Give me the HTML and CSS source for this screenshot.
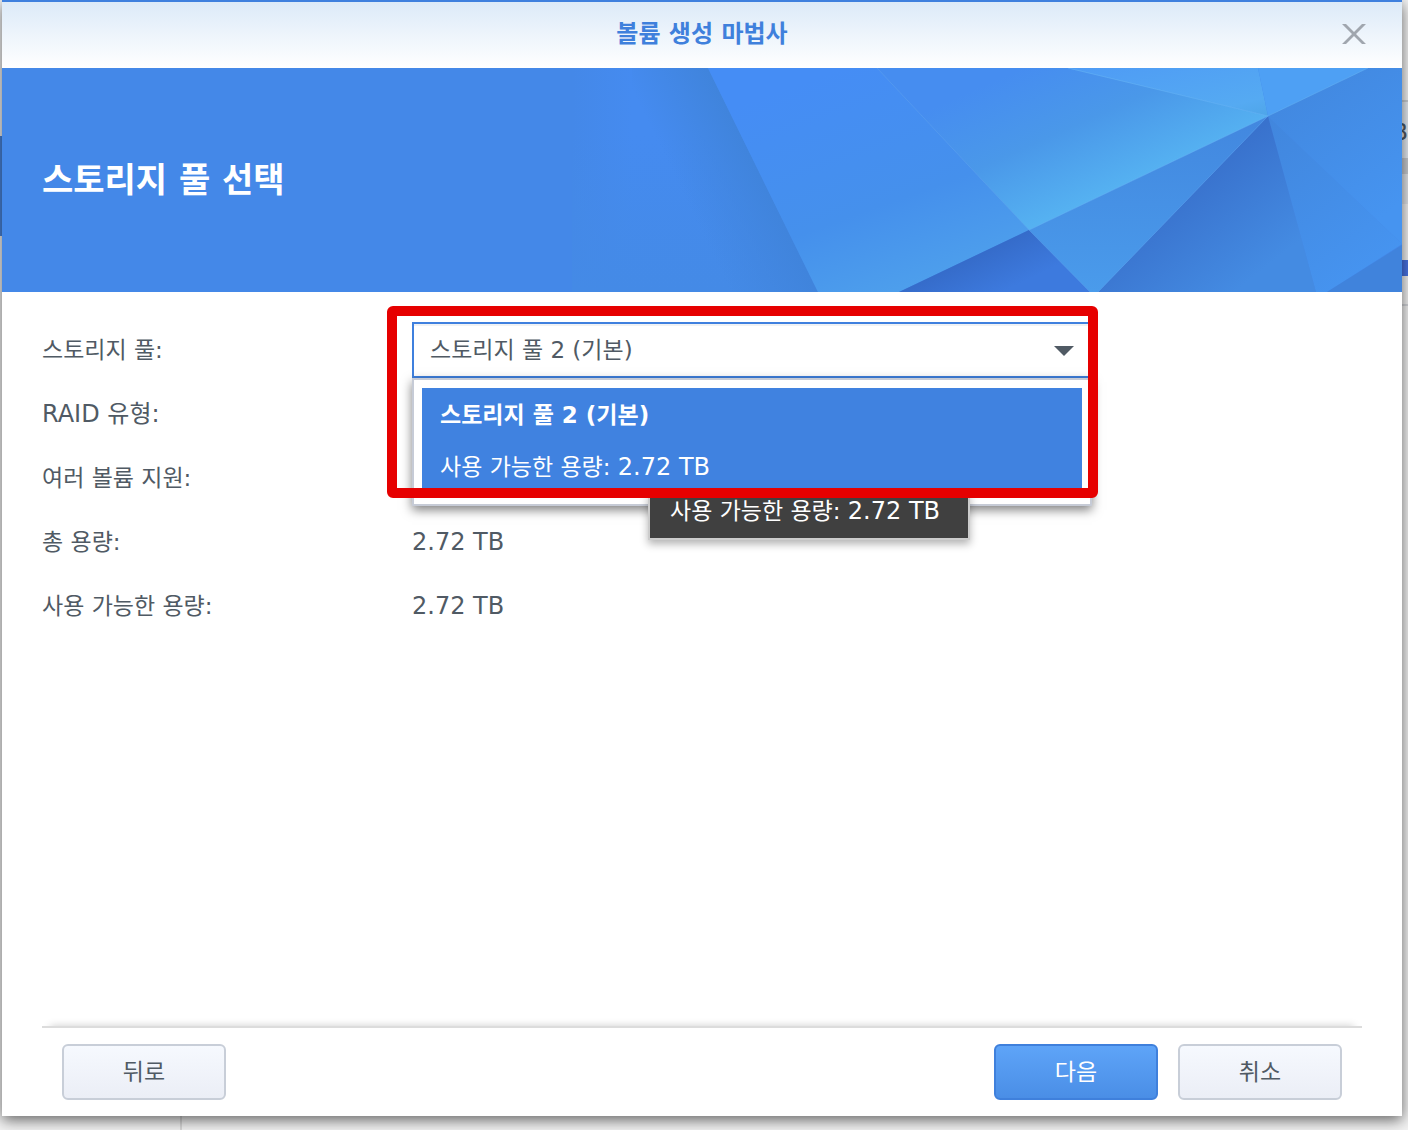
FILE: index.html
```html
<!DOCTYPE html>
<html lang="ko">
<head>
    <meta charset="UTF-8">
    <meta name="viewport" content="width=device-width, initial-scale=1.0">
    <title>볼륨 생성 마법사</title>
    <link rel="stylesheet" href="styles.css">
</head>
<body>

<div class="desktop">
    <!-- Storage manager window behind the wizard -->
    <div class="backdrop" aria-hidden="true">
        <div class="side-nav"><div class="nav-active"></div></div>
        <div class="pool-list">
            <div class="pool-head">TB</div>
            <div class="pool-bar"></div>
            <div class="pool-sub"></div>
            <div class="pool-usage"></div>
            <div class="pool-end"></div>
        </div>
    </div>

    <main class="dialog">
        <header class="title-bar">
            <h1>볼륨 생성 마법사</h1>
            <button class="close" type="button" aria-label="닫기">
                <svg width="24" height="20" viewBox="0 0 24 20">
                    <path d="M0 0h4l8 8 8-8h4L14 10l10 10h-4l-8-8-8 8H0l10-10z" fill="#a0a6ae"/>
                </svg>
            </button>
        </header>

        <section class="banner">
            <svg class="facets" width="830" height="224" viewBox="0 0 830 224" aria-hidden="true">
                <defs>
                    <linearGradient id="g1" gradientUnits="userSpaceOnUse" x1="0" y1="0" x2="200" y2="0">
                        <stop offset="0" stop-color="#4488e8"/>
                        <stop offset=".3" stop-color="#458bf0"/>
                        <stop offset="1" stop-color="#458bf0"/>
                    </linearGradient>
                    <linearGradient id="g1b" x1="0" y1="0" x2="0" y2="1">
                        <stop offset=".3" stop-color="#448ae6" stop-opacity="0"/>
                        <stop offset="1" stop-color="#448ae6"/>
                    </linearGradient>
                    <linearGradient id="g1s" gradientUnits="userSpaceOnUse" x1="120" y1="145" x2="190" y2="111">
                        <stop offset="0" stop-color="#4084dc" stop-opacity="0"/>
                        <stop offset="1" stop-color="#4084dc"/>
                    </linearGradient>
                    <linearGradient id="g2" gradientUnits="userSpaceOnUse" x1="270" y1="0" x2="350" y2="224">
                        <stop offset="0" stop-color="#458df5"/>
                        <stop offset=".6" stop-color="#4590ec"/>
                        <stop offset="1" stop-color="#4ea0ec"/>
                    </linearGradient>
                    <linearGradient id="g3" gradientUnits="userSpaceOnUse" x1="450" y1="0" x2="510" y2="135">
                        <stop offset="0" stop-color="#468df0"/>
                        <stop offset=".5" stop-color="#4a98e9"/>
                        <stop offset="1" stop-color="#55b1f1"/>
                    </linearGradient>
                    <linearGradient id="g4" x1="0" y1="0" x2="1" y2="1">
                        <stop offset="0" stop-color="#4e9bf5"/>
                        <stop offset=".8" stop-color="#55aaf2"/>
                        <stop offset="1" stop-color="#4ea5e8"/>
                    </linearGradient>
                    <linearGradient id="g5" x1="0" y1="0" x2="0" y2="1">
                        <stop offset="0" stop-color="#4287df"/>
                        <stop offset="1" stop-color="#4a9beb"/>
                    </linearGradient>
                    <linearGradient id="g6" gradientUnits="userSpaceOnUse" x1="410" y1="182" x2="430" y2="224">
                        <stop offset="0" stop-color="#356bc9"/>
                        <stop offset="1" stop-color="#3d7ade"/>
                    </linearGradient>
                    <linearGradient id="g7" gradientUnits="userSpaceOnUse" x1="610" y1="120" x2="680" y2="210">
                        <stop offset="0" stop-color="#3972cd"/>
                        <stop offset="1" stop-color="#448be2"/>
                    </linearGradient>
                    <linearGradient id="g8" x1="0" y1="0" x2=".6" y2="1">
                        <stop offset="0" stop-color="#4186dd"/>
                        <stop offset="1" stop-color="#4694f0"/>
                    </linearGradient>
                </defs>
                <rect width="260" height="224" fill="url(#g1)"/>
                <rect width="260" height="224" fill="url(#g1b)"/>
                <path d="M60 0h76l110 224H60z" fill="url(#g1s)"/>
                <path d="M136 0H305L457 162 327 224H246z" fill="url(#g2)"/>
                <path d="M305 0H496L696 48 457 162z" fill="url(#g3)"/>
                <path d="M496 0H686L696 48z" fill="url(#g4)"/>
                <path d="M686 0H796L696 48z" fill="#4ea0f4"/>
                <path d="M696 48L796 0h34v176z" fill="url(#g8)"/>
                <path d="M696 48L830 176 755 224H744z" fill="url(#g8)"/>
                <path d="M696 48L744 224H526z" fill="url(#g7)"/>
                <path d="M696 48L526 224H518L457 162z" fill="url(#g5)"/>
                <path d="M327 224L457 162 518 224z" fill="url(#g6)"/>
                <path d="M755 224L830 177v47z" fill="#4083dc"/>
                <path d="M457 162L696 48 796 0M496 0L696 48" fill="none" stroke="#6bbcf8" stroke-opacity=".5"/>
                <path d="M305 0L457 162M696 48L526 224M457 162L518 224" fill="none" stroke="#66aaf0" stroke-opacity=".4"/>
            </svg>
            <h2>스토리지 풀 선택</h2>
        </section>

        <form class="fields">
            <div class="row">
                <label for="pool">스토리지 풀:</label>
                <div class="combo">
                    <select id="pool">
                        <option>스토리지 풀 2 (기본)</option>
                    </select>
                    <svg class="arrow" width="20" height="10" viewBox="0 0 20 10" aria-hidden="true">
                        <path d="M0 0h20L10 10z" fill="#505a64"/>
                    </svg>
                    <div class="menu" role="listbox" aria-label="스토리지 풀">
                        <div class="menu-item" role="option" aria-selected="true">
                            <strong>스토리지 풀 2 (기본)</strong>
                            <div>사용 가능한 용량: <span class="value">2.72 TB</span></div>
                        </div>
                    </div>
                    <div class="tooltip" role="tooltip">사용 가능한 용량: <span class="value">2.72 TB</span></div>
                    <div class="highlight"></div>
                </div>
            </div>
            <div class="row">
                <label class="value" for="raid">RAID 유형:</label>
                <output id="raid"></output>
            </div>
            <div class="row">
                <label for="multi">여러 볼륨 지원:</label>
                <output id="multi"></output>
            </div>
            <div class="row">
                <label for="total">총 용량:</label>
                <output class="value" id="total">2.72 TB</output>
            </div>
            <div class="row">
                <label for="free">사용 가능한 용량:</label>
                <output class="value" id="free">2.72 TB</output>
            </div>
        </form>

        <footer class="actions">
            <button class="btn back" type="button">뒤로</button>
            <button class="btn primary" type="button">다음</button>
            <button class="btn" type="button">취소</button>
        </footer>
    </main>
</div>

</body>
</html>
```
FILE: styles.css
```css
* {
    box-sizing: border-box;
}
body {
    margin: 0;
    font-family: "DejaVu Sans", "Noto Sans CJK KR", sans-serif;
    font-size: 23px;
    color: #505a64;
    background-color: #f3f3f3;
}
.desktop {
    display: grid;
    min-height: 100vh;
    overflow: hidden;
}
.backdrop,
.dialog {
    grid-area: 1 / 1;
    min-width: 0;
}

/* Window behind the wizard */
.backdrop {
    display: flex;
}
.side-nav {
    width: 182px;
    padding-top: 136px;
    border-right: 2px solid #d8d8d8;
}
.nav-active {
    height: 100px;
    background-color: #4a86dc;
}
.pool-list {
    flex: 1;
    padding-top: 100px;
}
.pool-head {
    height: 58px;
    border-top: 2px solid #ccd0d4;
    background-color: #e6ecf3;
    font-size: 23px;
    line-height: 60px;
    text-align: right;
}
.pool-bar {
    height: 16px;
    background-color: #c8cbd0;
}
.pool-sub {
    height: 30px;
    background-color: #e2e5e9;
}
.pool-usage {
    height: 16px;
    margin-top: 56px;
    background-color: #4a74e4;
}
.pool-end {
    height: 30px;
    border-bottom: 2px solid #d4d6da;
}

/* Wizard dialog */
.dialog {
    display: flex;
    flex-direction: column;
    margin: 0 6px 14px 2px;
    border-top: 2px solid #3f80de;
    background-color: #fff;
    box-shadow: 0 4px 14px rgba(0, 0, 0, 0.6);
}
.title-bar {
    display: grid;
    grid-template-columns: 1fr auto 1fr;
    align-items: center;
    height: 66px;
    padding: 0 36px 2px;
    background: linear-gradient(#dceaf8, #fff);
}
.title-bar h1 {
    grid-column: 2;
    margin: 0;
    font-size: 24px;
    line-height: 32px;
    color: #3f80dc;
}
.close {
    justify-self: end;
    display: flex;
    padding: 0;
    border: 0;
    background: none;
    cursor: pointer;
}
.banner {
    display: grid;
    align-items: center;
    height: 224px;
    background-color: #4488e8;
    overflow: hidden;
}
.banner > * {
    grid-area: 1 / 1;
}
.facets {
    justify-self: end;
}
.banner h2 {
    margin: 0 40px;
    font-size: 34px;
    line-height: 44px;
    color: #fff;
}

/* Form */
.fields {
    flex: 1;
    padding: 26px 40px;
}
.row {
    display: grid;
    grid-template-columns: 370px minmax(0, 680px);
    align-items: center;
    height: 64px;
    line-height: 32px;
}
.value {
    font-size: 24px;
}
.combo {
    position: relative;
}
.combo select {
    display: block;
    width: 100%;
    height: 56px;
    padding: 0 16px;
    border: 2px solid #3f80de;
    border-radius: 0;
    background-color: #fff;
    box-shadow: inset 0 2px 0 #f0f2f4;
    color: inherit;
    font: inherit;
    appearance: none;
}
.arrow {
    position: absolute;
    top: 24px;
    right: 18px;
    pointer-events: none;
}
.menu {
    position: absolute;
    top: 56px;
    left: 0;
    width: 100%;
    padding: 8px;
    border: 2px solid #c6cbd6;
    background-color: #fff;
    box-shadow: 0 4px 10px rgba(0, 0, 0, 0.5);
}
.menu-item {
    height: 108px;
    padding: 1px 18px;
    background-color: #4082e0;
    color: #fff;
    line-height: 52px;
}
.menu-item strong {
    display: block;
}
.tooltip {
    position: absolute;
    top: 170px;
    left: 236px;
    width: 322px;
    height: 48px;
    padding: 0 20px;
    border: 2px solid #ccc;
    border-top: 0;
    background-color: #404040;
    box-shadow: 0 4px 8px rgba(0, 0, 0, 0.3);
    color: #fff;
    line-height: 38px;
    white-space: nowrap;
}
/* Red frame round the pool selector */
.highlight {
    position: absolute;
    top: -16px;
    left: -25px;
    right: -6px;
    height: 192px;
    border: 10px solid #e60000;
    border-radius: 6px;
    pointer-events: none;
}

/* Buttons */
.actions {
    display: flex;
    gap: 20px;
    margin: 0 40px;
    padding: 16px 20px;
    border-top: 2px solid #dcdcdc;
    box-shadow: 0 -8px 8px -8px rgba(0, 0, 0, 0.2);
}
.btn {
    width: 164px;
    height: 56px;
    padding: 0 0 4px;
    border: 2px solid #c8ced8;
    border-radius: 6px;
    background: linear-gradient(#f6f9fe, #ebeef6);
    color: #505a64;
    font: inherit;
    cursor: pointer;
}
.back {
    margin-right: auto;
}
.primary {
    border-color: #3f80dc;
    background: linear-gradient(#5ea4f8, #4a8ee6);
    color: #fff;
}
```
